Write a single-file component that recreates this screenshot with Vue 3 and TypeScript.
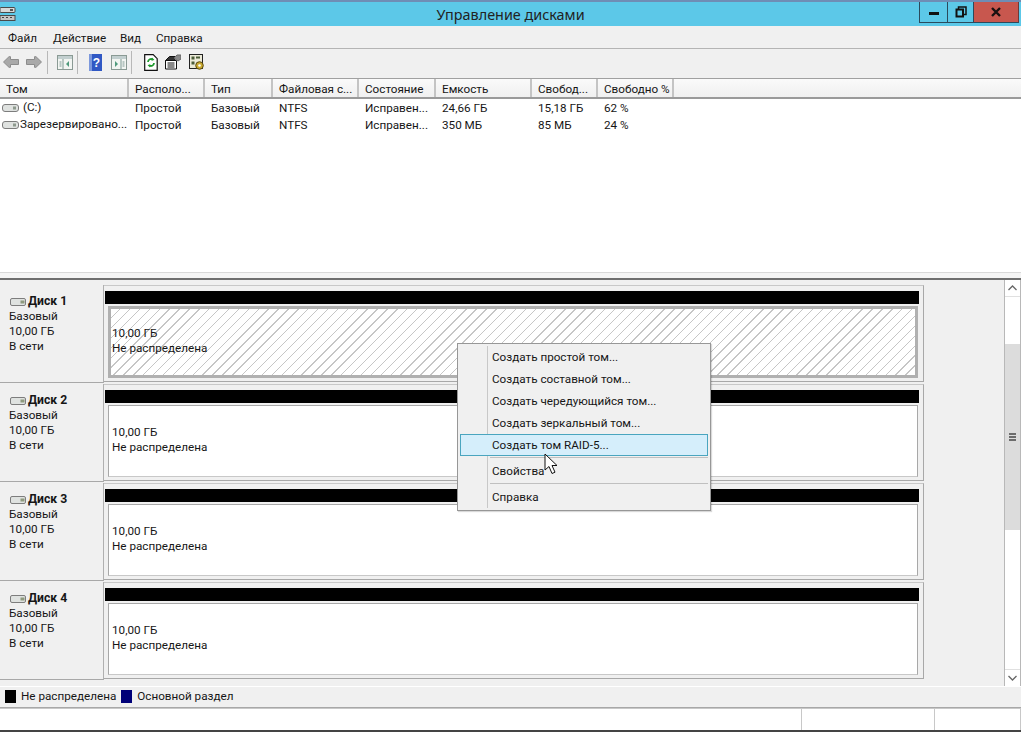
<script setup lang="ts">
interface Column { label: string; width: number }
const columns: Column[] = [
  { label: 'Том', width: 129 },
  { label: 'Располо...', width: 76 },
  { label: 'Тип', width: 68 },
  { label: 'Файловая с...', width: 86 },
  { label: 'Состояние', width: 77 },
  { label: 'Емкость', width: 96 },
  { label: 'Свобод...', width: 66 },
  { label: 'Свободно %', width: 76 },
]
const volumes: string[][] = [
  ['\u00a0(C:)', 'Простой', 'Базовый', 'NTFS', 'Исправен...', '24,66 ГБ', '15,18 ГБ', '62 %'],
  ['Зарезервировано...', 'Простой', 'Базовый', 'NTFS', 'Исправен...', '350 МБ', '85 МБ', '24 %'],
]
const disks = [1, 2, 3, 4]
const menuTop = ['Создать простой том...', 'Создать составной том...', 'Создать чередующийся том...', 'Создать зеркальный том...']
</script>

<template>
  <div class="app">
    <header class="title">
      <svg class="app-icon" width="16" height="18" viewBox="0 0 16 18">
        <rect x="0" y="2.500" width="15" height="5" rx="1" fill="#d8d8d8" stroke="#4a4a4a" />
        <rect x="0" y="10.500" width="15" height="5" fill="#c4c4c4" stroke="#4a4a4a" />
        <rect x="10" y="4" width="3" height="2" fill="#555" />
        <path d="M2 12.500h2M6 12.500h2M10 12.500h2" stroke="#444" />
      </svg>
      <span class="title-text">Управление дисками</span>
      <div class="controls">
        <div class="ctl ctl-min"><i class="min-glyph"></i></div>
        <div class="ctl ctl-max">
          <svg width="12" height="12" viewBox="0 0 12 12"><path d="M3.500 3V1h7.500v7.500H9" fill="none" stroke="#111" stroke-width="1.500" /><rect x="1.500" y="3.500" width="6.500" height="7" fill="none" stroke="#111" stroke-width="2" /></svg>
        </div>
        <div class="ctl ctl-close">
          <svg width="12" height="10" viewBox="0 0 12 10"><path d="M2 1l8 8M10 1l-8 8" stroke="#1a1010" stroke-width="2.400" /></svg>
        </div>
      </div>
    </header>

    <nav class="menubar">
      <span class="m1">Файл</span><span class="m2">Действие</span><span class="m3">Вид</span><span class="m4">Справка</span>
    </nav>

    <div class="toolbar">
      <svg class="tb a1" width="16" height="12" viewBox="0 0 16 12"><path d="M.5 6L6 .7h1.500V3.500h8v5h-8v2.800H6z" fill="#a9a9a9" stroke="#8c8c8c" /></svg>
      <svg class="tb a2" width="16" height="12" viewBox="0 0 16 12"><path d="M15.500 6L10 .7H8.500V3.500h-8v5h8v2.800H10z" fill="#a9a9a9" stroke="#8c8c8c" /></svg>
      <i class="tb-sep s1"></i>
      <svg class="tb i1" width="16" height="15" viewBox="0 0 16 15"><rect x=".5" y=".5" width="15" height="14" fill="#f2f5f2" stroke="#8a9a94" /><rect x="1" y="1" width="14" height="3" fill="#c2cfcf" /><path d="M6 4v10M2.500 7h2M2.500 9h2M2.500 11h2" stroke="#7f9a94" /><path d="M12 6v6L9 9z" fill="#4f9a7c" /></svg>
      <i class="tb-sep s2"></i>
      <svg class="tb i2" width="13" height="17" viewBox="0 0 13 17"><rect width="13" height="17" fill="#3058c4" /><rect x="0" y="0" width="3" height="17" fill="#7c98dc" /><text x="7.500" y="13" text-anchor="middle" font-size="12" font-weight="700" font-family="Liberation Sans, sans-serif" fill="#fff">?</text></svg>
      <svg class="tb i3" width="16" height="15" viewBox="0 0 16 15"><rect x=".5" y=".5" width="15" height="14" fill="#f2f5f2" stroke="#8a9a94" /><rect x="1" y="1" width="14" height="3" fill="#c2cfcf" /><path d="M10 4v10M11.500 7h2M11.500 9h2M11.500 11h2" stroke="#7f9a94" /><path d="M4 6v6l3-3z" fill="#4f9a7c" /></svg>
      <i class="tb-sep s3"></i>
      <svg class="tb i4" width="14" height="17" viewBox="0 0 14 17"><path d="M.7.700h8.500l4 4v11.600H.7z" fill="#fff" stroke="#111" stroke-width="1.200" /><path d="M4 8a3 3 0 0 1 5-2.200M10 9a3 3 0 0 1-5 2.200" fill="none" stroke="#1e9a2e" stroke-width="1.800" /><path d="M8 3.500l2.500 2.500-3 .5zM6 13.500L3.500 11l3-.5z" fill="#1e9a2e" /></svg>
      <svg class="tb i5" width="16" height="16" viewBox="0 0 16 16"><path d="M.5 6.500h11v8.500H.5z" fill="#fff" stroke="#111" /><path d="M.5 6.500l4-4h6l-1 4z" fill="#333" stroke="#111" /><path d="M2.500 9h7M2.500 11h7M2.500 13h7" stroke="#111" /><path d="M9 4l3-3h4v4l-3 2z" fill="#8a8a8a" stroke="#666" /></svg>
      <svg class="tb i6" width="16" height="17" viewBox="0 0 16 17"><rect x=".5" y=".5" width="13" height="14" fill="#ecebd8" stroke="#222" /><path d="M2.500 2.500h3v3h-3zM7 2.500h4v2H7zM2.500 7.500h3v3h-3z" fill="#4b5c38" /><circle cx="10.500" cy="11.500" r="3.800" fill="#c9a92c" stroke="#5a4a12" /><circle cx="10.500" cy="11.500" r="1.300" fill="#fff" /></svg>
    </div>

    <section class="list">
      <div class="list-head">
        <div v-for="c in columns" :key="c.label" class="th" :style="{ width: c.width + 'px' }">{{ c.label }}</div>
      </div>
      <div v-for="(row, r) in volumes" :key="r" class="tr">
        <div v-for="(cell, i) in row" :key="i" class="td" :class="{ 'td-first': i === 0 }" :style="{ width: columns[i].width + 'px' }">
          <svg v-if="i === 0" class="drive" width="17" height="8" viewBox="0 0 17 8"><rect x=".5" y=".5" width="16" height="7" rx="2.500" fill="#dfe2e0" stroke="#7d7d7d" /><rect x="11" y="2.500" width="3" height="3" fill="#8e9a8e" /></svg>
          <span>{{ cell }}</span>
        </div>
      </div>
    </section>

    <div class="splitter"></div>

    <section class="pane">
      <div class="disks">
        <div v-for="n in disks" :key="n" class="disk">
          <div class="disk-info">
            <div class="disk-name">
              <svg width="16" height="8" viewBox="0 0 16 8"><rect x=".5" y=".5" width="15" height="7" rx="1.500" fill="#dfe2e0" stroke="#7d7d7d" /><rect x="10.500" y="2.500" width="4" height="3" fill="#8e9a7e" /></svg>
              <b>Диск {{ n }}</b>
            </div>
            <div>Базовый</div>
            <div>10,00 ГБ</div>
            <div>В сети</div>
          </div>
          <div class="disk-body">
            <div class="bar"></div>
            <div class="vol" :class="{ selected: n === 1 }">
              <div>10,00 ГБ</div>
              <div>Не распределена</div>
            </div>
          </div>
        </div>
      </div>
      <div class="gap"></div>
      <div class="scroll">
        <div class="sb-btn"><svg width="9" height="6" viewBox="0 0 9 6"><path d="M.5 5l4-4 4 4" fill="none" stroke="#666" stroke-width="1.300" /></svg></div>
        <div class="sb-track-a"></div>
        <div class="sb-thumb"><i></i><i></i><i></i></div>
        <div class="sb-track-b"></div>
        <div class="sb-btn"><svg width="9" height="6" viewBox="0 0 9 6"><path d="M.5 1l4 4 4-4" fill="none" stroke="#666" stroke-width="1.300" /></svg></div>
      </div>
    </section>

    <footer class="legend">
      <i class="swatch black"></i><span>Не распределена</span>
      <i class="swatch navy"></i><span>Основной раздел</span>
    </footer>

    <div class="status">
      <div class="st st-a"></div>
      <div class="st st-b"></div>
      <div class="st st-c"></div>
    </div>
    <div class="bottom"></div>

    <div class="ctx">
      <div v-for="m in menuTop" :key="m" class="ctx-item">{{ m }}</div>
      <div class="ctx-item hot">Создать том RAID-5...</div>
      <div class="ctx-sep"></div>
      <div class="ctx-item">Свойства</div>
      <div class="ctx-sep"></div>
      <div class="ctx-item">Справка</div>
    </div>

    <svg class="cursor" width="14" height="22" viewBox="0 0 14 22"><path d="M1 1v16l4-3.500 3 7 3-1.300-3-6.700h5z" fill="#fff" stroke="#111" stroke-width="1" /></svg>
  </div>
</template>

<style scoped>
.app {
  position: relative;
  width: 1021px;
  height: 732px;
  display: flex;
  flex-direction: column;
  overflow: hidden;
  background: #f0f0f0;
  font-family: Roboto, "Noto Sans", sans-serif;
  font-size: 11.700px;
  color: #161616;
  border-top: 2px solid #6f8db5;
  box-sizing: border-box;
}
.title {
  position: relative;
  height: 24px;
  flex: none;
  background: #5cc8e8;
  display: flex;
  align-items: center;
  justify-content: center;
}
.app-icon { position: absolute; left: 0; top: 3px; }
.title-text { font-family: "Noto Sans", sans-serif; font-size: 14.400px; color: #222; }
.controls {
  position: absolute;
  right: 2px;
  top: 0;
  height: 21px;
  display: flex;
}
.ctl {
  height: 21px;
  display: flex;
  align-items: center;
  justify-content: center;
  box-sizing: border-box;
  border-bottom: 1px solid #2b4a5c;
  border-left: 1px solid #2b4a5c;
}
.ctl-min { width: 28px; }
.ctl-max { width: 26px; }
.ctl-close { width: 46px; background: #c8574e; border-right: 1px solid #6b3a3a; }
.min-glyph { width: 10px; height: 3px; background: #111; display: block; margin-top: 3px; }
.menubar {
  height: 20px;
  padding-top: 2px;
  flex: none;
  display: flex;
  align-items: center;
  padding-left: 8px;
  border-bottom: 1px solid #b4b4b4;
  box-sizing: content-box;
}
.m1 { width: 45px; }
.m2 { width: 67px; }
.m3 { width: 36px; }
.toolbar {
  height: 26px;
  padding-bottom: 3px;
  flex: none;
  display: flex;
  align-items: center;
  box-sizing: content-box;
  border-bottom: 1px solid #a0a0a0;
}
.tb { flex: none; }
.tb-sep { width: 1px; height: 23px; background: #b8b8b8; flex: none; }
.a1 { margin-left: 3px; }
.a2 { margin-left: 7px; }
.s1 { margin-left: 5px; }
.i1 { margin-left: 9px; }
.s2 { margin-left: 4px; }
.i2 { margin-left: 11px; }
.i3 { margin-left: 9px; }
.s3 { margin-left: 4px; }
.i4 { margin-left: 12px; }
.i5 { margin-left: 7px; }
.i6 { margin-left: 8px; }
.list {
  height: 193px;
  flex: none;
  background: #fff;
}
.list-head {
  height: 18px;
  display: flex;
  background: linear-gradient(#fafafa, #f0f0f0);
  border-bottom: 2px solid #9a9a9a;
  box-sizing: content-box;
}
.th {
  box-sizing: border-box;
  padding-left: 6px;
  line-height: 21px;
  border-right: 2px solid #c4c4c4;
  white-space: nowrap;
  overflow: hidden;
  flex: none;
}
.tr { display: flex; height: 17px; line-height: 19px; }
.td {
  box-sizing: border-box;
  padding-left: 6px;
  white-space: nowrap;
  flex: none;
}
.td-first { padding-left: 2px; display: flex; align-items: center; gap: 1px; }
.drive { flex: none; }
.splitter {
  height: 8px;
  flex: none;
  background: #f4f4f4;
  border-top: 1px solid #d8d8d8;
  border-bottom: 2px solid #6e6e6e;
  box-sizing: border-box;
}
.pane {
  height: 406px;
  flex: none;
  display: flex;
}
.disks { width: 924px; flex: none; padding-top: 5px; box-sizing: border-box; }
.disk { display: flex; height: 99px; box-sizing: border-box; }
.disk-info {
  width: 104px;
  flex: none;
  padding: 9px 0 0 10px;
  box-sizing: border-box;
  line-height: 15px;
  border-right: 1px solid #b0b0b0;
  border-bottom: 1px solid #a8a8a8;
  margin-bottom: 1px;
}
.disk-name { display: flex; align-items: center; gap: 2px; font-size: 12.200px; }
.disk-info > div:not(.disk-name) { margin-left: -1px; }
.disk-body {
  flex: 1;
  box-sizing: border-box;
  border-top: 1px solid #c8c8c8;
  border-right: 1px solid #a8a8a8;
  border-bottom: 1px solid #a8a8a8;
  margin-bottom: 2px;
  padding: 5px 4px 0 1px;
}
.bar { height: 13px; background: #000; }
.vol {
  margin: 2px 1px 0 3px;
  height: 72px;
  box-sizing: border-box;
  border: 1px solid #a8a8a8;
  border-bottom-color: #c8c8c8;
  background: #fff;
  padding: 19px 0 0 3px;
  line-height: 15px;
}
.vol.selected {
  border: 3px solid #b0b0b0;
  padding: 17px 0 0 1px;
  background: repeating-linear-gradient(135deg, #fff 0, #fff 6px, #c6c6c6 6px, #c6c6c6 7px);
}
.gap { flex: 1; }
.scroll {
  width: 17px;
  flex: none;
  display: flex;
  flex-direction: column;
  border-left: 1px solid #b8b8b8;
  border-right: 1px solid #b8b8b8;
  box-sizing: border-box;
  background: #fff;
}
.sb-btn { height: 16px; display: flex; align-items: center; justify-content: center; flex: none; background: #fff; }
.sb-track-a { height: 48px; flex: none; border-top: 1px solid #e0e0e0; box-sizing: border-box; }
.sb-thumb {
  height: 186px;
  flex: none;
  background: #dcdcdc;
  display: flex;
  flex-direction: column;
  align-items: center;
  justify-content: center;
  gap: 1px;
}
.sb-thumb i { display: block; width: 7px; height: 2px; background: #6c6c6c; }
.sb-track-b { flex: 1; border-bottom: 1px solid #e0e0e0; }
.legend {
  height: 22px;
  flex: none;
  display: flex;
  align-items: center;
  box-sizing: border-box;
  border-top: 1px solid #fff;
  border-bottom: 1px solid #a8a8a8;
  padding-left: 5px;
  padding-bottom: 2px;
}
.swatch { display: block; width: 11px; height: 13px; margin-right: 5px; flex: none; }
.black { background: #000; }
.navy { background: #000078; margin-left: 5px; }
.status {
  height: 22px;
  flex: none;
  background: #fff;
  display: flex;
  border-top: 1px solid #c8c8c8;
  box-sizing: border-box;
}
.st { border-right: 1px solid #c8c8c8; box-sizing: border-box; flex: none; }
.st-a { width: 802px; }
.st-b { width: 133px; }
.st-c { width: 86px; }
.bottom { flex: 1; background: #444; }
.ctx {
  position: absolute;
  left: 457px;
  top: 341px;
  width: 254px;
  height: 168px;
  box-sizing: border-box;
  background: #f0f0f0;
  border: 1px solid #979797;
  padding: 2px;
  box-shadow: 1px 1px 1px rgba(0,0,0,.15);
}
.ctx::before {
  content: "";
  position: absolute;
  left: 29px;
  top: 2px;
  bottom: 2px;
  width: 1px;
  background: #c8c8c8;
}
.ctx-item {
  position: relative;
  height: 22px;
  line-height: 23px;
  padding-left: 32px;
  white-space: nowrap;
  box-sizing: border-box;
}
.ctx-item.hot {
  background: #d5eefb;
  border: 1px solid #4aa5bf;
  line-height: 21px;
  padding-left: 31px;
}
.ctx-sep { height: 1px; margin: 1px 0 2px 30px; background: #c0c0c0; position: relative; }
.cursor { position: absolute; left: 544px; top: 451px; }
</style>
